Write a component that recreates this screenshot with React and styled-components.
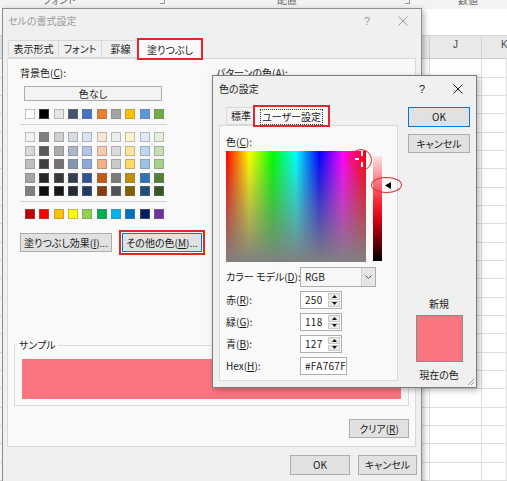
import React from 'react'
import styled, { createGlobalStyle } from 'styled-components'

const GlobalStyle = createGlobalStyle`
  html, body {
    margin: 0;
    padding: 0;
    background: #f3f3f3;
  }
  body {
    font-family: "Noto Sans CJK JP", "Noto Sans", sans-serif;
    font-size: 10px;
    line-height: 14px;
    color: #1a1a1a;
    font-feature-settings: "palt";
  }
  * { box-sizing: border-box; }
`

const THEME_ROW = ['#ffffff', '#000000', '#e7e6e6', '#44546a', '#4472c4', '#ed7d31', '#a5a5a5', '#ffc000', '#5b9bd5', '#70ad47']
const TINT_ROWS = [
    ['#f2f2f2', '#7f7f7f', '#d0cece', '#d6dce4', '#d9e2f3', '#fbe5d5', '#ededed', '#fff2cc', '#deebf6', '#e2efd9'],
    ['#d8d8d8', '#595959', '#aeabab', '#adb9ca', '#b4c6e7', '#f7cbac', '#dbdbdb', '#fee599', '#bdd7ee', '#c5e0b3'],
    ['#bfbfbf', '#3f3f3f', '#757070', '#8496b0', '#8eaadb', '#f4b183', '#c9c9c9', '#ffd965', '#9cc3e5', '#a8d08d'],
    ['#a5a5a5', '#262626', '#3a3838', '#323f4f', '#2f5496', '#c55a11', '#7b7b7b', '#bf9000', '#2e75b5', '#538135'],
    ['#7f7f7f', '#0c0c0c', '#171616', '#222a35', '#1f3864', '#843c0b', '#525252', '#7f6000', '#1e4e79', '#375623'],
]
const STANDARD_ROW = ['#c00000', '#ff0000', '#ffc000', '#ffff00', '#92d050', '#00b050', '#00b0f0', '#0070c0', '#002060', '#7030a0']

const CURRENT = { hex: '#FA767F', r: 250, g: 118, b: 127, lum: 0.72 }
const LUM_BAR_HEIGHT = 105
const SHEET_ROWS = 23

// ---------- spreadsheet behind the dialogs ----------

const Desktop = styled.div`
    position: relative;
    width: 507px;
    height: 481px;
    overflow: hidden;
    background: #f3f3f3;
`

const Sheet = styled.div`
    display: flex;
    flex-direction: column;
    height: 100%;
`

const Ribbon = styled.div`
    display: grid;
    grid-template-columns: 170px 245px 1fr;
    height: 10px;
    overflow: hidden;
    color: #6a6a6a;
`

const RibbonGroup = styled.div`
    display: flex;
    align-items: flex-start;
    padding-left: ${p => p.$labelLeft}px;
`

const RibbonLabel = styled.span`
    margin-top: -7px;
`

const Launcher = styled.span`
    margin: 0 5px 0 auto;
    width: 5px;
    height: 4px;
    border-right: 1px solid #999;
    border-bottom: 1px solid #999;
`

const FormulaBar = styled.div`
    height: 29px;
    background: #fff;
    border-bottom: 1px solid #d4d4d4;
`

const ColumnHeader = styled.div`
    display: grid;
    grid-template-columns: 430px 52px 1fr;
    height: 26px;
    background: #e9e9e9;
    border-bottom: 1px solid #cdcdcd;
`

const HeaderCell = styled.div`
    display: flex;
    align-items: flex-end;
    justify-content: ${p => (p.$left ? 'flex-start' : 'center')};
    padding: 0 0 6px ${p => (p.$left ? 19 : 0)}px;
    border-right: 1px solid #d2d2d2;
    font-family: "Liberation Sans", sans-serif;
    color: #444;
`

const GridRow = styled.div`
    display: grid;
    grid-template-columns: 430px 52px 1fr;
    height: 18.33px;
    flex: none;
    background: #fff;
    border-bottom: 1px solid #dedede;
`

const GridCell = styled.div`
    border-right: 1px solid #dedede;
`

// ---------- shared window chrome ----------

const Window = styled.section`
    position: absolute;
    left: ${p => p.$x}px;
    top: ${p => p.$y}px;
    width: ${p => p.$w}px;
    height: ${p => p.$h}px;
    display: flex;
    flex-direction: column;
    background: #f0f0f0;
    border: 1px solid ${p => p.$edge};
    box-shadow: 2px 2px 6px rgba(0, 0, 0, 0.3);
`

const TitleBar = styled.header`
    flex: none;
    display: flex;
    align-items: center;
    height: ${p => p.$h}px;
    padding-left: ${p => p.$pad}px;
    color: ${p => (p.$inactive ? '#9a9a9a' : '#1a1a1a')};
`

const TitleText = styled.span`
    flex: 1;
`

const CaptionButton = styled.span`
    width: 36px;
    display: flex;
    align-items: center;
    justify-content: center;
    font-family: "Liberation Sans", sans-serif;
    font-size: 11px;
`

const TabStrip = styled.div`
    position: relative;
    z-index: 1;
    flex: none;
    display: flex;
    align-items: flex-end;
    height: 20px;
    padding-left: ${p => p.$pad}px;
`

const Tab = styled.div`
    width: ${p => p.$w}px;
    height: ${p => (p.$active ? 20 : 18)}px;
    margin-left: ${p => (p.$active ? -2 : -1)}px;
    margin-bottom: ${p => (p.$active ? -1 : 0)}px;
    display: flex;
    align-items: center;
    justify-content: center;
    background: ${p => (p.$active ? '#f9f9f9' : '#f0f0f0')};
    border: 1px solid #d9d9d9;
    border-bottom: ${p => (p.$active ? 'none' : '1px solid #d9d9d9')};
    outline: ${p => (p.$marked ? '2px solid #e3262d' : 'none')};
    outline-offset: -1px;
    &:first-child { margin-left: 0; }
`

const FocusText = styled.span`
    padding: 0 1px;
    border: 1px dotted #333;
`

const PushButton = styled.div`
    flex: none;
    width: ${p => p.$w}px;
    height: ${p => p.$h || 19}px;
    display: flex;
    align-items: center;
    justify-content: center;
    background: #e1e1e1;
    border: 1px solid ${p => (p.$focus ? '#0078d7' : '#adadad')};
    outline: ${p => (p.$marked ? '2px solid #e3262d' : 'none')};
    outline-offset: 1px;
`

const Mnemonic = styled.u`
    text-underline-offset: 1px;
`

function CloseGlyph({ color }) {
    return (
        <svg width="10" height="10" viewBox="0 0 10 10">
            <path d="M0.5 0.5 L9.5 9.5 M9.5 0.5 L0.5 9.5" stroke={color} strokeWidth="1" />
        </svg>
    )
}

// ---------- main dialog: セルの書式設定 ----------

const Panel = styled.div`
    display: flex;
    flex-direction: column;
    margin: 0 5px 0 4px;
    padding: 6px 6px 8px 6px;
    background: #f9f9f9;
    border: 1px solid #d9d9d9;
`

const TopRow = styled.div`
    display: flex;
    padding-left: 6px;
`

const LeftCol = styled.div`
    width: 196px;
    display: flex;
    flex-direction: column;
`

const FieldLabel = styled.div`
    line-height: 16px;
    white-space: nowrap;
`

const NoColorButton = styled.div`
    margin: 5px 0 0 4px;
    width: 138px;
    height: 15px;
    display: flex;
    align-items: center;
    justify-content: center;
    background: #f3f3f3;
    border: 1px solid #adadad;
`

const SwatchRow = styled.div`
    display: flex;
    justify-content: space-between;
    width: 139px;
    margin: ${p => p.$mt}px 0 0 5px;
`

const SwatchGrid = styled.div`
    display: flex;
    flex-direction: column;
    gap: 3.6px;
    margin-top: 7px;
`

const Swatch = styled.span`
    width: 10px;
    height: 10px;
    background: ${p => p.$c};
    border: 1px solid rgba(120, 120, 120, 0.45);
`

const Divider = styled.div`
    width: 147px;
    height: 1px;
    margin-top: 5px;
    background: #d4d4d4;
`

const ButtonRow = styled.div`
    display: flex;
    gap: 10px;
    margin-top: 14px;
`

const GroupBox = styled.fieldset`
    margin: 87px 0 0;
    padding: 0;
    border: 1px solid #dcdcdc;
    min-width: 0;
`

const GroupLegend = styled.legend`
    margin-left: 2px;
    padding: 0 2px;
    line-height: 12px;
`

const SampleFill = styled.div`
    height: 40px;
    margin: 8px 7px 6px;
    background: ${p => p.$c};
`

const ClearRow = styled.div`
    display: flex;
    justify-content: flex-end;
    margin-top: 13px;
`

const Footer = styled.div`
    display: flex;
    justify-content: flex-end;
    gap: 8px;
    padding: 8px 4px 0 0;
`

function PaletteRow({ colors, mt }) {
    return (
        <SwatchRow $mt={mt}>
            {colors.map((c, i) => <Swatch key={i} $c={c} />)}
        </SwatchRow>
    )
}

function FormatCellsDialog() {
    return (
        <Window $x={2} $y={8} $w={420} $h={490} $edge="#8e8e8e">
            <TitleBar $h={24} $pad={5} $inactive>
                <TitleText>セルの書式設定</TitleText>
                <CaptionButton>?</CaptionButton>
                <CaptionButton><CloseGlyph color="#9a9a9a" /></CaptionButton>
            </TitleBar>
            <TabStrip $pad={5} style={{ marginTop: 5 }}>
                <Tab $w={51}>表示形式</Tab>
                <Tab $w={44}>フォント</Tab>
                <Tab $w={39}>罫線</Tab>
                <Tab $w={64} $active $marked>塗りつぶし</Tab>
            </TabStrip>
            <Panel>
                <TopRow>
                    <LeftCol>
                        <FieldLabel>背景色(<Mnemonic>C</Mnemonic>):</FieldLabel>
                        <NoColorButton>色なし</NoColorButton>
                        <PaletteRow colors={THEME_ROW} mt={8} />
                        <Divider />
                        <SwatchGrid>
                            {TINT_ROWS.map((row, i) => <PaletteRow key={i} colors={row} mt={0} />)}
                        </SwatchGrid>
                        <Divider />
                        <PaletteRow colors={STANDARD_ROW} mt={7} />
                        <ButtonRow>
                            <PushButton $w={92}>塗りつぶし効果(<Mnemonic>I</Mnemonic>)...</PushButton>
                            <PushButton $w={80} $focus $marked>その他の色(<Mnemonic>M</Mnemonic>)...</PushButton>
                        </ButtonRow>
                    </LeftCol>
                    <FieldLabel>パターンの色(<Mnemonic>A</Mnemonic>):</FieldLabel>
                </TopRow>
                <GroupBox>
                    <GroupLegend>サンプル</GroupLegend>
                    <SampleFill $c={CURRENT.hex} />
                </GroupBox>
                <ClearRow>
                    <PushButton $w={60}>クリア(<Mnemonic>R</Mnemonic>)</PushButton>
                </ClearRow>
            </Panel>
            <Footer>
                <PushButton $w={60} $h={20}>OK</PushButton>
                <PushButton $w={59} $h={20}>キャンセル</PushButton>
            </Footer>
        </Window>
    )
}

// ---------- colour dialog: 色の設定 ----------

const ColorBody = styled.div`
    flex: 1;
    display: flex;
    padding: 4px 0 0 6px;
`

const LeftPane = styled.div`
    width: 179px;
    display: flex;
    flex-direction: column;
`

const CustomPanel = styled.div`
    height: 256px;
    padding: 8px 0 0 6px;
    background: #f9f9f9;
    border: 1px solid #d9d9d9;
`

const SpectrumRow = styled.div`
    position: relative;
    display: flex;
    align-items: flex-start;
    margin-top: 1px;
`

const Spectrum = styled.div`
    position: relative;
    width: 140px;
    height: 111px;
    background:
        linear-gradient(to bottom, rgba(128, 128, 128, 0), #808080),
        linear-gradient(to right, #f00, #ff0, #0f0, #0ff, #00f, #f0f, #f00);
`

const Crosshair = styled.svg`
    position: absolute;
    left: 128px;
    top: 0;
`

const LumBar = styled.div`
    position: relative;
    width: 9px;
    height: ${LUM_BAR_HEIGHT}px;
    margin: 5px 0 0 7px;
    background: linear-gradient(to bottom, #fbe3e5, hsl(356, 93%, 55%) 45%, #d0000f 62%, #000);
`

const LumArrow = styled.svg`
    position: absolute;
    left: 12px;
`

const Annotation = styled.span`
    position: absolute;
    left: ${p => p.$x}px;
    top: ${p => p.$y}px;
    width: ${p => p.$w}px;
    height: ${p => p.$h}px;
    border: 1.5px solid #e3262d;
    border-radius: 50%;
`

const FormGrid = styled.div`
    display: grid;
    grid-template-columns: 74px auto;
    grid-auto-rows: 18px;
    grid-template-rows: 20px;
    row-gap: 4px;
    align-items: center;
    justify-items: start;
    margin-top: 5px;
`

const SelectBox = styled.div`
    width: 76px;
    height: 20px;
    display: flex;
    background: #f7f7f7;
    border: 1px solid #adadad;
`

const SelectValue = styled.span`
    flex: 1;
    display: flex;
    align-items: center;
    padding-left: 4px;
`

const SelectArrow = styled.span`
    width: 14px;
    display: flex;
    align-items: center;
    justify-content: center;
    background: #e6e6e6;
    border-left: 1px solid #cfcfcf;
`

const NumberBox = styled.div`
    width: ${p => p.$w}px;
    height: 18px;
    display: flex;
    background: #fff;
    border: 1px solid #adadad;
`

const NumberValue = styled.span`
    flex: 1;
    display: flex;
    align-items: center;
    padding-left: 4px;
    letter-spacing: 0.3px;
`

const SpinButtons = styled.span`
    width: 13px;
    display: flex;
    flex-direction: column;
    gap: 1px;
    padding: 1px 1px 1px 0;
`

const SpinHalf = styled.span`
    flex: 1;
    display: flex;
    align-items: center;
    justify-content: center;
    background: #eaeaea;
    border: 1px solid #c9c9c9;
`

const RightPane = styled.div`
    width: 62px;
    margin-left: 10px;
    padding: 2px 0 5px;
    display: flex;
    flex-direction: column;
    align-items: center;
`

const PreviewLabel = styled.div`
    line-height: 14px;
`

const PreviewSwatch = styled.div`
    width: 47px;
    height: 47px;
    margin: 4px 0 6px;
    background: ${p => p.$c};
    border: 1px solid #8a8a8a;
`

const ResizeGrip = styled.svg`
    position: absolute;
    right: 1px;
    bottom: 1px;
`

function Spin({ value }) {
    return (
        <NumberBox $w={42}>
            <NumberValue>{value}</NumberValue>
            <SpinButtons>
                <SpinHalf>
                    <svg width="5" height="3" viewBox="0 0 5 3"><path d="M0 3 L2.5 0 L5 3 Z" fill="#111" /></svg>
                </SpinHalf>
                <SpinHalf>
                    <svg width="5" height="3" viewBox="0 0 5 3"><path d="M0 0 L2.5 3 L5 0 Z" fill="#111" /></svg>
                </SpinHalf>
            </SpinButtons>
        </NumberBox>
    )
}

function ColorDialog() {
    const arrowTop = Math.round((1 - CURRENT.lum) * LUM_BAR_HEIGHT) - 3
    return (
        <Window $x={212} $y={75} $w={265} $h={313} $edge="#7c7c7c">
            <TitleBar $h={25} $pad={6}>
                <TitleText>色の設定</TitleText>
                <CaptionButton>?</CaptionButton>
                <CaptionButton><CloseGlyph color="#222" /></CaptionButton>
            </TitleBar>
            <ColorBody>
                <LeftPane>
                    <TabStrip $pad={7}>
                        <Tab $w={30}>標準</Tab>
                        <Tab $w={75} $active $marked><FocusText>ユーザー設定</FocusText></Tab>
                    </TabStrip>
                    <CustomPanel>
                        <FieldLabel>色(<Mnemonic>C</Mnemonic>):</FieldLabel>
                        <SpectrumRow>
                            <Spectrum>
                                <Crosshair width="12" height="17" viewBox="0 0 12 17">
                                    <rect x="1" y="7" width="4" height="2" fill="#fff" />
                                    <rect x="7" y="0" width="2" height="5" fill="#fff" />
                                    <rect x="7" y="11" width="2" height="5" fill="#fff" />
                                </Crosshair>
                            </Spectrum>
                            <LumBar>
                                <LumArrow width="6" height="7" viewBox="0 0 6 7" style={{ top: arrowTop }}>
                                    <path d="M0 3.5 L6 0 L6 7 Z" fill="#000" />
                                </LumArrow>
                            </LumBar>
                            <Annotation $x={124} $y={-2} $w={22} $h={22} />
                            <Annotation $x={145} $y={26} $w={31} $h={16} />
                        </SpectrumRow>
                        <FormGrid>
                            <FieldLabel>カラー モデル(<Mnemonic>D</Mnemonic>):</FieldLabel>
                            <SelectBox>
                                <SelectValue>RGB</SelectValue>
                                <SelectArrow>
                                    <svg width="7" height="4" viewBox="0 0 7 4"><path d="M0.5 0.5 L3.5 3.5 L6.5 0.5" stroke="#555" fill="none" /></svg>
                                </SelectArrow>
                            </SelectBox>
                            <FieldLabel>赤(<Mnemonic>R</Mnemonic>):</FieldLabel>
                            <Spin value={CURRENT.r} />
                            <FieldLabel>緑(<Mnemonic>G</Mnemonic>):</FieldLabel>
                            <Spin value={CURRENT.g} />
                            <FieldLabel>青(<Mnemonic>B</Mnemonic>):</FieldLabel>
                            <Spin value={CURRENT.b} />
                            <FieldLabel>Hex(<Mnemonic>H</Mnemonic>):</FieldLabel>
                            <NumberBox $w={47}>
                                <NumberValue>{CURRENT.hex}</NumberValue>
                            </NumberBox>
                        </FormGrid>
                    </CustomPanel>
                </LeftPane>
                <RightPane>
                    <PushButton $w={62} $h={20} $focus>OK</PushButton>
                    <PushButton $w={62} $h={19} style={{ marginTop: 7 }}>キャンセル</PushButton>
                    <PreviewLabel style={{ marginTop: 'auto' }}>新規</PreviewLabel>
                    <PreviewSwatch $c={CURRENT.hex} />
                    <PreviewLabel>現在の色</PreviewLabel>
                </RightPane>
            </ColorBody>
            <ResizeGrip width="8" height="8" viewBox="0 0 8 8">
                <path d="M7 1 L1 7 M7 4 L4 7" stroke="#9a9a9a" strokeWidth="1" />
            </ResizeGrip>
        </Window>
    )
}

export default function App() {
    return (
        <>
            <GlobalStyle />
            <Desktop>
                <Sheet>
                    <Ribbon>
                        <RibbonGroup $labelLeft={43}>
                            <RibbonLabel>フォント</RibbonLabel>
                            <Launcher />
                        </RibbonGroup>
                        <RibbonGroup $labelLeft={107}>
                            <RibbonLabel>配置</RibbonLabel>
                            <Launcher />
                        </RibbonGroup>
                        <RibbonGroup $labelLeft={43}>
                            <RibbonLabel>数値</RibbonLabel>
                        </RibbonGroup>
                    </Ribbon>
                    <FormulaBar />
                    <ColumnHeader>
                        <HeaderCell>I</HeaderCell>
                        <HeaderCell>J</HeaderCell>
                        <HeaderCell $left>K</HeaderCell>
                    </ColumnHeader>
                    {Array.from({ length: SHEET_ROWS }, (_, i) => (
                        <GridRow key={i}>
                            <GridCell />
                            <GridCell />
                            <GridCell />
                        </GridRow>
                    ))}
                </Sheet>
                <FormatCellsDialog />
                <ColorDialog />
            </Desktop>
        </>
    )
}
